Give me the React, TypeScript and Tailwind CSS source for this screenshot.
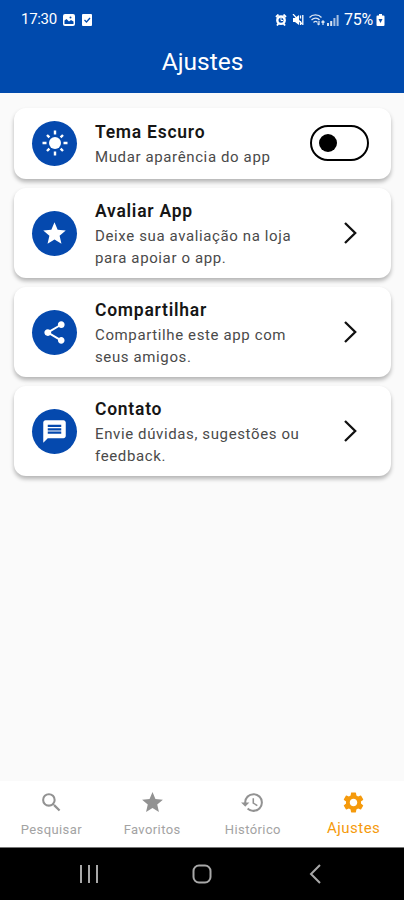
import type { ReactNode } from "react";
import type { IconType } from "react-icons";
import { MdHistory, MdMessage, MdSearch, MdSettings, MdShare, MdStar } from "react-icons/md";

function SunIcon() {
  return (
    <svg viewBox="0 0 26 26" className="size-[26px]" fill="none" stroke="currentColor" strokeWidth="2.400">
      <circle cx="13" cy="13" r="6" fill="currentColor" stroke="none" />
      <path d="M13 .5v4M13 21.500v4M.5 13h4M21.500 13h4M5 5l2.400 2.400M18.600 18.600l2.400 2.400M5 21l2.400-2.400M18.600 7.400L21 5" />
    </svg>
  );
}

function StatusBar() {
  return (
    <div className="flex h-[38px] items-center justify-between pl-[21px] pr-[19px] pt-px text-[15px] tracking-[-0.3px]">
      <div className="flex items-center">
        <span className="w-[42px]">17:30</span>
        <svg viewBox="0 0 12 12" className="size-[12px]">
          <rect width="12" height="12" rx="2" fill="#fff" />
          <path d="M1.500 9V6.500l2-1.500L6 7.500l2-1.500 2.500 1.500V10h-9z" fill="#004aad" />
          <circle cx="7.500" cy="3.500" r="1" fill="#004aad" />
        </svg>
        <svg viewBox="0 0 10 12" className="ml-[7px] h-[12px] w-[10px]">
          <rect width="10" height="12" rx="1" fill="#fff" />
          <path d="M2.500 6l2 2 3.500-4" fill="none" stroke="#004aad" strokeWidth="1.300" />
        </svg>
      </div>
      <div className="flex items-center">
        <svg viewBox="0 0 12 12" className="size-[12px]">
          <circle cx="6" cy="6.200" r="3.700" fill="none" stroke="#fff" strokeWidth="2.400" />
          <path d="M1 3l2.500-2.500M11 3L8.500.5M2 11.500l1.500-2M10 11.500l-1.500-2" stroke="#fff" strokeWidth="1.800" />
          <path d="M6 4v2.500h2" fill="none" stroke="#fff" />
        </svg>
        <svg viewBox="0 0 12 12" className="ml-[5px] size-[12px]">
          <path d="M1 4h2l4-3v10L3 8H1z" fill="#fff" />
          <path d="M1 0l9 10" stroke="#fff" strokeWidth="1.200" />
          <path d="M8.500 1.500v3M8.500 7v4M10.800 1v10" stroke="#fff" strokeWidth="1.300" />
        </svg>
        <svg viewBox="0 0 17 12" className="ml-[5px] h-[12px] w-[17px]" fill="none" stroke="#fff" strokeWidth="1.300" opacity="0.85">
          <path d="M.5 3.500c3-3.500 9-3.500 12 0M2.500 6c2.500-2.500 6-2.500 8 0M4.500 8.500c1.500-1.500 3-1.500 4 0" />
          <path d="M10 7v4M8.500 9.500l1.500 1.500M14 11V7M12.500 8.500L14 7l1.500 1.500" />
        </svg>
        <svg viewBox="0 0 12 12" className="ml-[1px] size-[12px]" fill="#fff">
          <path d="M0 9h2v3H0zM3.200 7h2v5h-2z" opacity="0.85" />
          <path d="M6.400 4h2v8h-2zM9.600 1h2v11h-2z" opacity="0.650" />
        </svg>
        <span className="ml-[5px] w-[32px] text-[16px]">75%</span>
        <svg viewBox="0 0 9 12" className="h-[12px] w-[9px]">
          <path d="M3 0h3v1.500h1.500q1 0 1 1V11q0 1-1 1h-6q-1 0-1-1V2.500q0-1 1-1H3z" fill="#fff" />
          <path d="M2.500 5h4L4.500 9z" fill="#004aad" />
        </svg>
      </div>
    </div>
  );
}

function Chevron() {
  return (
    <svg viewBox="0 0 14 24" className="mr-[33px] h-6 w-[14px]" fill="none" stroke="#111" strokeWidth="2.300">
      <path d="M1 2L11.200 12 1 22" />
    </svg>
  );
}

type CardProps = {
  icon: ReactNode;
  title: string;
  lines: string[];
  action?: ReactNode;
};

function SettingCard({ icon, title, lines, action = <Chevron /> }: CardProps) {
  return (
    <section
      className={`flex items-center rounded-[12px] bg-white pl-[18px] shadow-[0_3px_4px_rgba(0,0,0,0.28)] ${
        lines.length > 1 ? "h-[90px]" : "h-[71px] pb-px"
      }`}
    >
      <div className="flex size-[45px] shrink-0 items-center justify-center rounded-full bg-[#0549ae] text-white">
        {icon}
      </div>
      <div className="ml-[18px] flex-1 whitespace-nowrap">
        <h2 className="mb-px text-[17.500px] font-semibold leading-[26px] tracking-[0.75px] text-[#161616]">{title}</h2>
        {lines.map((line) => (
          <p key={line} className="text-[15px] leading-[22px] tracking-[0.62px] text-[#4a4a4a]">
            {line}
          </p>
        ))}
      </div>
      {action}
    </section>
  );
}

const tabs: { label: string; Icon: IconType; active?: boolean }[] = [
  { label: "Pesquisar", Icon: MdSearch },
  { label: "Favoritos", Icon: MdStar },
  { label: "Histórico", Icon: MdHistory },
  { label: "Ajustes", Icon: MdSettings, active: true },
];

export default function App() {
  return (
    <div className="flex h-[900px] w-[404px] flex-col overflow-hidden bg-[#fafafa] font-[Roboto,sans-serif]">
      <header className="h-[93px] shrink-0 bg-[#004aad] text-white">
        <StatusBar />
        <h1 className="pl-px pt-[7px] text-center text-[24.500px] leading-[34px]">Ajustes</h1>
      </header>

      <main className="flex flex-1 flex-col gap-[9px] pl-[14px] pr-[13px] pt-[15px]">
        <SettingCard
          icon={<SunIcon />}
          title="Tema Escuro"
          lines={["Mudar aparência do app"]}
          action={
            <button role="switch" aria-checked="false" aria-label="Tema Escuro" className="mr-[22px] flex h-9 w-[59px] items-center rounded-full border-2 border-black pl-[7px]">
              <span className="size-[18px] rounded-full bg-black" />
            </button>
          }
        />
        <SettingCard
          icon={<MdStar size={27} />}
          title="Avaliar App"
          lines={["Deixe sua avaliação na loja", "para apoiar o app."]}
        />
        <SettingCard
          icon={<MdShare size={27} />}
          title="Compartilhar"
          lines={["Compartilhe este app com", "seus amigos."]}
        />
        <SettingCard
          icon={<MdMessage size={27} />}
          title="Contato"
          lines={["Envie dúvidas, sugestões ou", "feedback."]}
        />
      </main>

      <nav className="grid h-[66px] shrink-0 grid-cols-4 bg-white pl-px pt-[9px]">
        {tabs.map(({ label, Icon, active }) => (
          <div key={label} className={active ? "flex flex-col items-center text-[#f59a0c]" : "flex flex-col items-center text-[#929292]"}>
            <Icon size={25} />
            <span className={active ? "mt-[3px] text-[15px] leading-5 tracking-[0.5px]" : "mt-[5px] text-[13px] leading-5 tracking-[0.4px] text-[#a3a3a3]"}>
              {label}
            </span>
          </div>
        ))}
      </nav>

      <footer className="flex h-[53px] shrink-0 items-center border-t border-[#777] bg-black text-[#a8a8a8]">
        <svg viewBox="0 0 18 18" className="ml-[80px] size-[18px]" stroke="currentColor" strokeWidth="2">
          <path d="M1 0v18M9 0v18M17 0v18" />
        </svg>
        <svg viewBox="0 0 20 20" className="ml-[94px] size-5" fill="none" stroke="currentColor" strokeWidth="2">
          <rect x="1.500" y="1.500" width="17" height="17" rx="5.500" />
        </svg>
        <svg viewBox="0 0 12 20" className="ml-[97px] h-5 w-3" fill="none" stroke="currentColor" strokeWidth="2">
          <path d="M11 1L2 10l9 9" />
        </svg>
      </footer>
    </div>
  );
}
